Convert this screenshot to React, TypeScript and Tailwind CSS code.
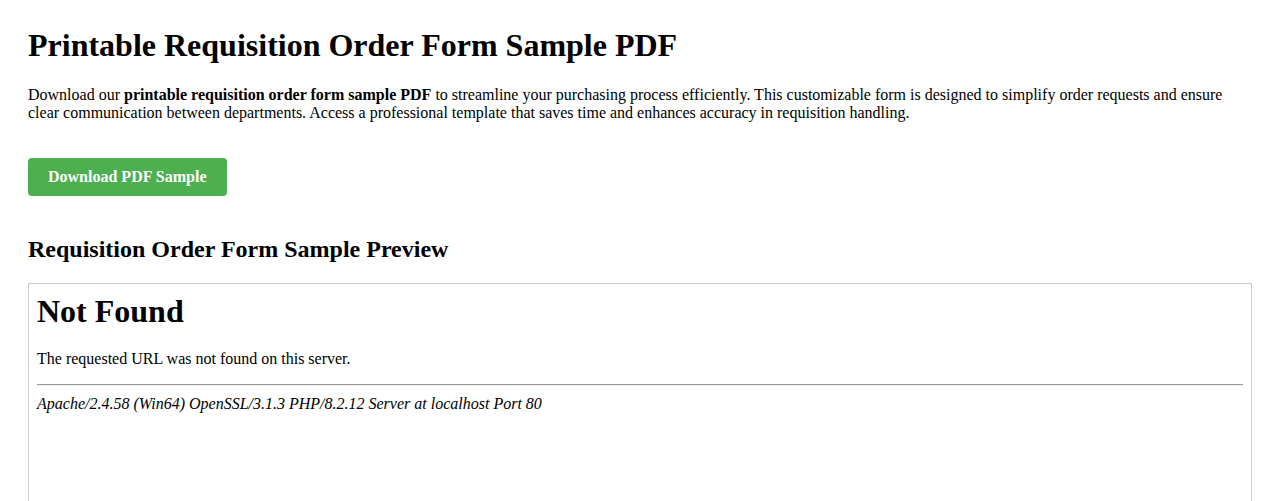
import React from "react";

export default function App() {
  return (
    <div className="min-h-screen bg-white px-[28px] pt-[27px] text-black font-['Liberation_Serif','Times_New_Roman',serif]">
      <h1 className="text-[32px] font-bold leading-[normal]">
        Printable Requisition Order Form Sample PDF
      </h1>
      <p className="mt-[22px] text-[16px] leading-[normal]">
        Download our <strong className="font-bold">printable requisition order form sample PDF</strong> to streamline your purchasing process efficiently. This customizable form is designed to simplify order requests and ensure clear communication between departments. Access a professional template that saves time and enhances accuracy in requisition handling.
      </p>
      <div className="mt-[36px]">
        <a className="inline-block rounded-[4px] bg-[#4CAF50] px-[20px] py-[10px] text-[16px] font-bold leading-[normal] text-white">
          Download PDF Sample
        </a>
      </div>
      <h2 className="mt-[40px] text-[24px] font-bold leading-[normal]">
        Requisition Order Form Sample Preview
      </h2>
      <div className="mt-[20px] h-[600px] w-[1224px] border border-[#cccccc] px-[8px] pt-[9px]">
        <h1 className="text-[32px] font-bold leading-[normal]">Not Found</h1>
        <p className="mt-[20px] text-[16px] leading-[normal]">
          The requested URL was not found on this server.
        </p>
        <hr className="mt-[16px] border-t border-b border-t-[#9a9a9a] border-b-[#eeeeee]" />
        <address className="mt-[9px] text-[16px] italic leading-[normal]">
          Apache/2.4.58 (Win64) OpenSSL/3.1.3 PHP/8.2.12 Server at localhost Port 80
        </address>
      </div>
    </div>
  );
}
